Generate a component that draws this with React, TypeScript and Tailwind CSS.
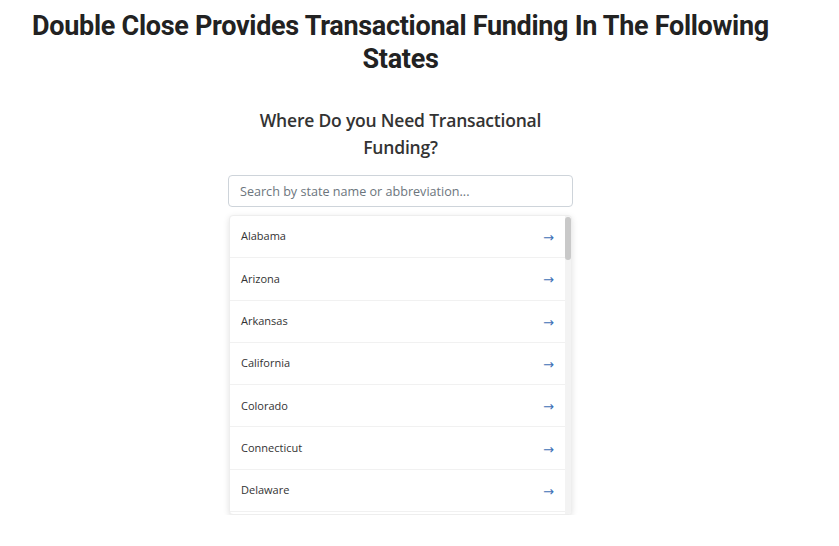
const states = [
  "Alabama",
  "Arizona",
  "Arkansas",
  "California",
  "Colorado",
  "Connecticut",
  "Delaware",
];

function App() {
  return (
    <div className="w-[801px] bg-white text-[#212529] font-['Open_Sans',sans-serif]">
      {/* Page Header */}
      <h1 className="pt-[10px] text-center text-[27px] leading-[33px] font-bold tracking-[-0.3px] text-[#222] whitespace-nowrap font-['Roboto',sans-serif]">
        Double Close Provides Transactional Funding In The Following
        <br />
        States
      </h1>

      <div className="mx-auto mt-[31px] w-[345px]">
        <h2 className="text-center text-[17.5px] leading-[27px] font-semibold tracking-[-0.2px] text-[#333]">
          Where Do you Need Transactional
          <br />
          Funding?
        </h2>

        {/* Search */}
        <input
          type="text"
          placeholder="Search by state name or abbreviation..."
          className="mt-[14px] block h-[32px] w-full rounded-[4px] border border-[#ced4da] px-[11px] text-[12.6px] text-[#333] placeholder:text-[#6c757d] outline-none"
        />

        {/* State List */}
        <div className="mt-[8px] mx-[1px] flex h-[300px] overflow-hidden rounded-[4px] border border-[#eee] bg-white shadow-[0_2px_6px_rgba(0,0,0,0.12)]">
          <div className="flex-1">
            {states.map((s) => (
              <div
                key={s}
                className="flex h-[42.3px] items-center justify-between border-b border-[#f1f1f1] pl-[11px] pr-[11px]"
              >
                <span className="text-[11px] text-[#333]">{s}</span>
                <span className="pt-[2px] text-[13px] leading-none text-[#3d6fb6] font-['DejaVu_Sans',sans-serif]">
                  →
                </span>
              </div>
            ))}
          </div>
          {/* Scrollbar */}
          <div className="w-[6px] bg-[#f3f3f3] pt-[1px]">
            <div className="h-[43px] rounded-[3px] bg-[#c9c9c9]" />
          </div>
        </div>
      </div>
    </div>
  );
}

export default App;
